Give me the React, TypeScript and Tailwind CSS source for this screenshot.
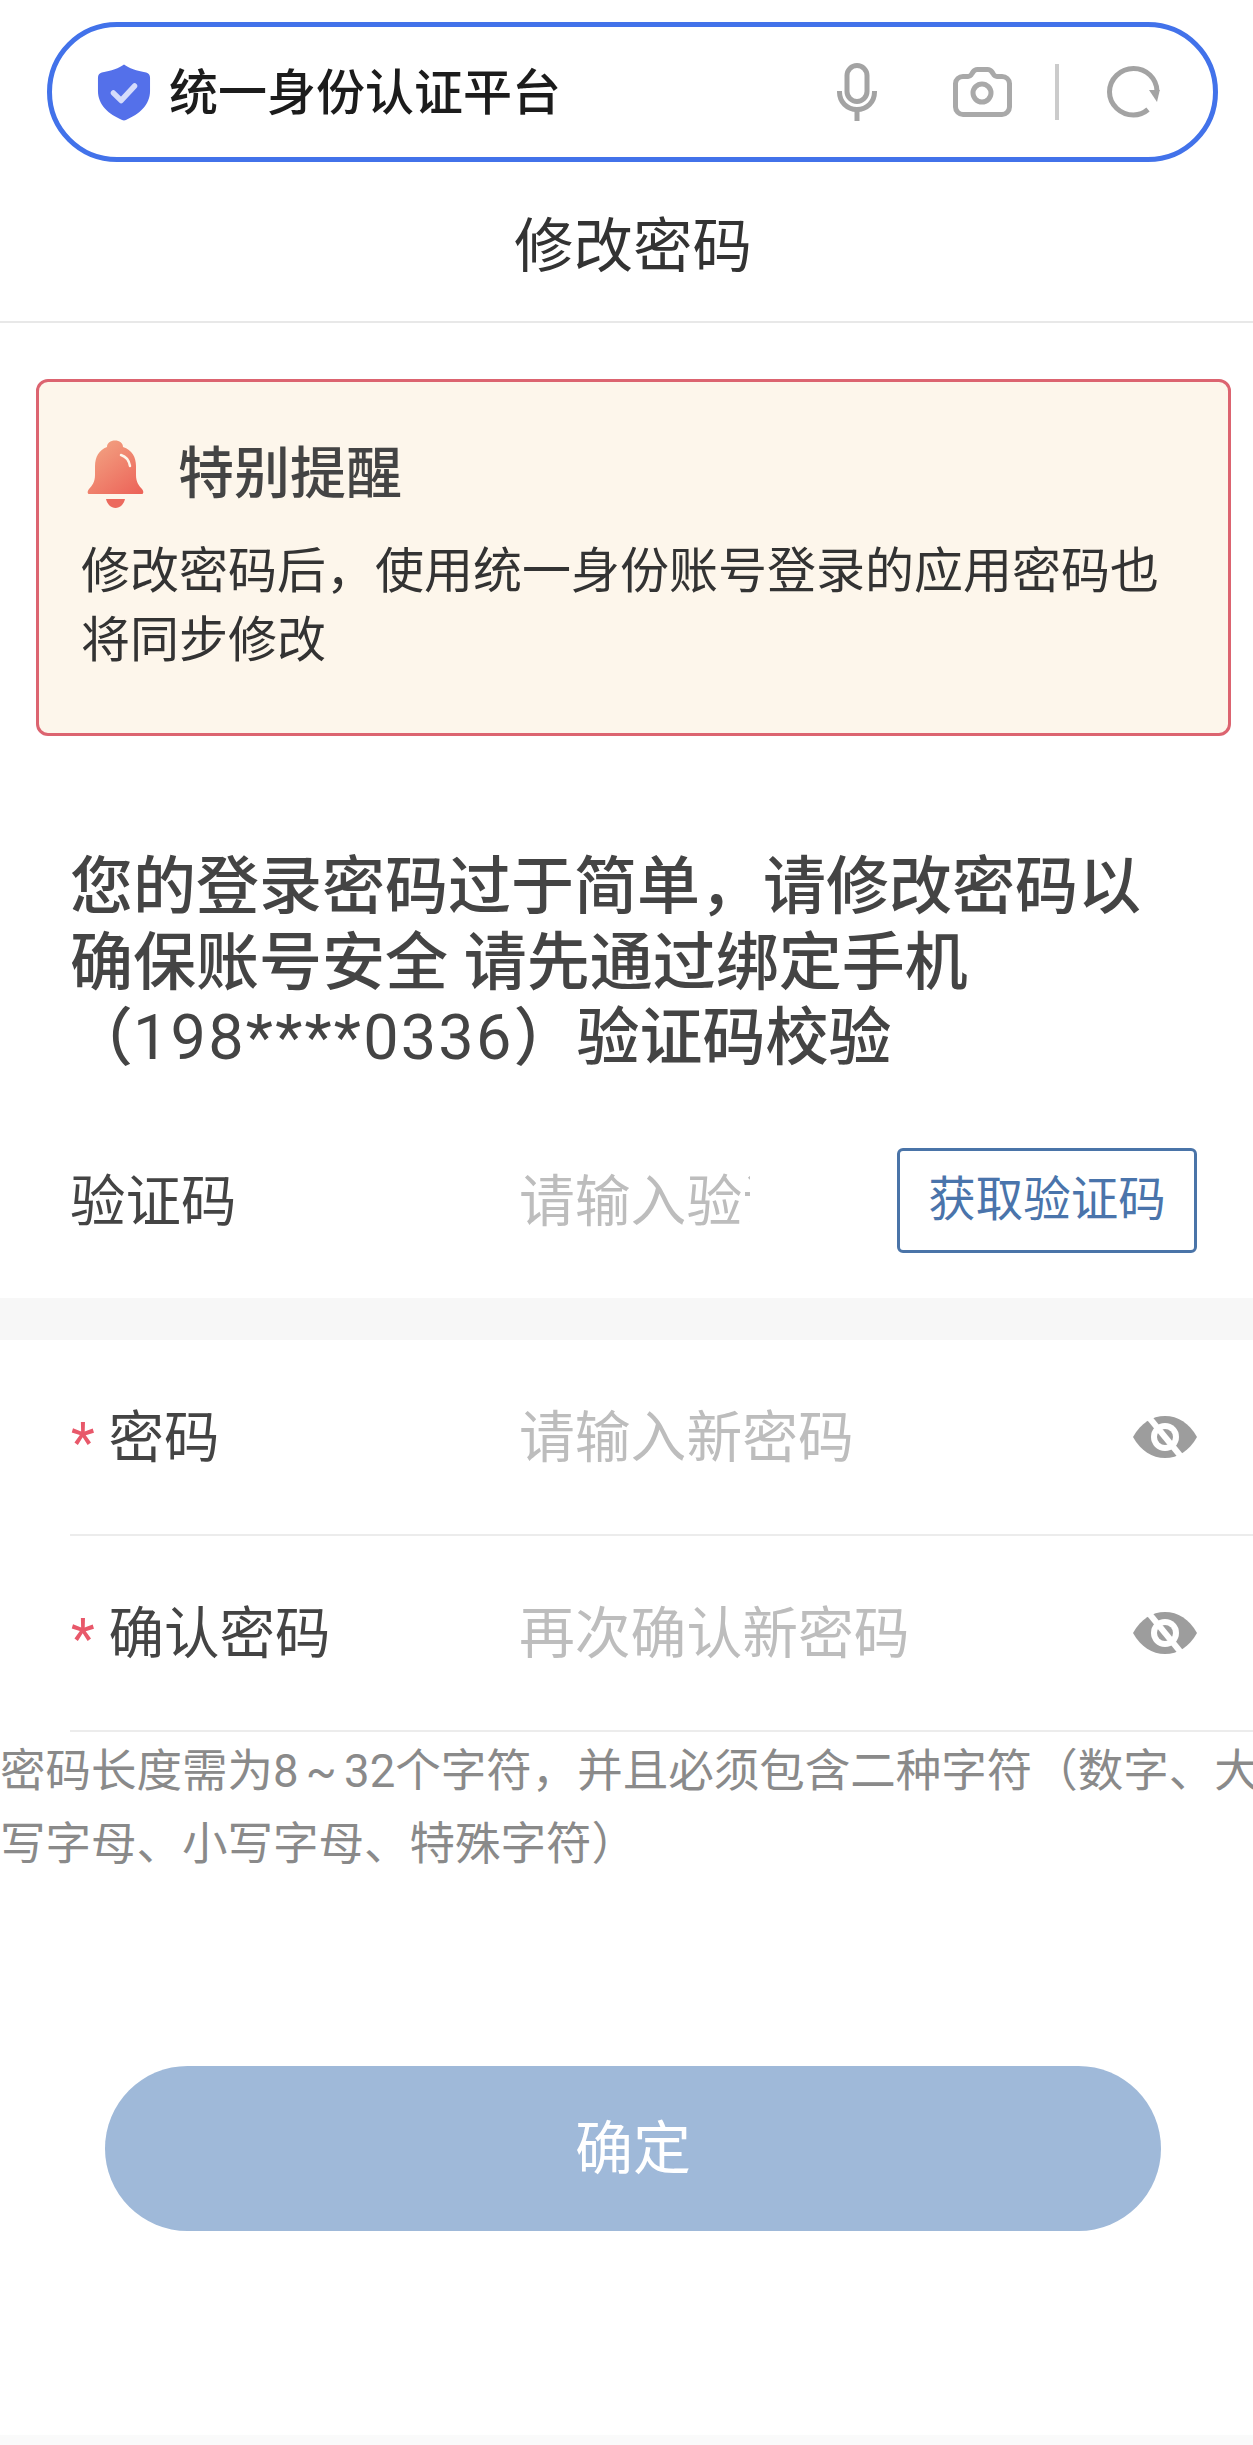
import React from "react";

function Shield() {
  return (
    <svg width="54" height="58" viewBox="0 0 56 58" preserveAspectRatio="none" className="shrink-0">
      <path d="M28 1.5C33 5 41 8 51 9.5C53.5 10 55 12 55 14.5V28C55 42 44 51 30 57C28.7 57.5 27.3 57.5 26 57C12 51 1 42 1 28V14.5C1 12 2.5 10 5 9.5C15 8 23 5 28 1.5Z" fill="#5470ea" />
      <path d="M17 30L25 37.5L39 23" fill="none" stroke="#d5dcfb" strokeWidth="5.5" strokeLinecap="round" strokeLinejoin="round" />
    </svg>
  );
}

function Mic() {
  return (
    <svg width="40" height="58" viewBox="0 0 40 58" className="shrink-0">
      <rect x="10" y="2.5" width="20" height="36" rx="10" fill="none" stroke="#a3a3a3" strokeWidth="5" />
      <path d="M2.5 28V29C2.5 39 10 46.5 20 46.5C30 46.5 37.5 39 37.5 29V28" fill="none" stroke="#a3a3a3" strokeWidth="5" />
      <path d="M20 46V58" stroke="#a3a3a3" strokeWidth="5" />
    </svg>
  );
}

function Camera() {
  return (
    <svg width="59" height="50" viewBox="0 0 59 50" className="shrink-0">
      <path d="M10 9.500H15C17 9.500 18 8.500 19 6.500L20 5C21 3.500 22.500 2.500 24.500 2.500H34.500C36.500 2.500 38 3.500 39 5L40 6.500C41 8.500 42 9.500 44 9.500H49C53 9.500 56.500 12.500 56.500 16.500V40C56.500 44 53 47.500 49 47.500H10C6 47.500 2.500 44 2.500 40V16.500C2.500 12.500 6 9.500 10 9.500Z" fill="none" stroke="#a9a9a9" strokeWidth="5" />
      <circle cx="29" cy="26" r="9" fill="none" stroke="#a9a9a9" strokeWidth="5" />
    </svg>
  );
}

function Refresh() {
  return (
    <svg width="53" height="52" viewBox="0 0 53 52" className="shrink-0">
      <path d="M41 43.500C37 47 32 49 26.500 49C13.500 49 2.500 38.500 2.500 26C2.500 13 13.500 2.500 26.500 2.500C39.500 2.500 49.500 12.500 50 25" fill="none" stroke="#a3a3a3" strokeWidth="5" />
      <path d="M42 24H52.800L50 36Z" fill="#a3a3a3" />
    </svg>
  );
}

function Bell() {
  return (
    <svg width="57" height="68" viewBox="0 0 57 68" className="shrink-0">
      <defs>
        <linearGradient id="bellFill" x1="0.1" y1="0" x2="0.9" y2="1">
          <stop offset="0" stopColor="#f3a584" />
          <stop offset="1" stopColor="#ec6459" />
        </linearGradient>
      </defs>
      <path d="M20 7C20 3 23.500 0.500 28 0.500C32.500 0.500 36 3 36 7C45 10 49 17 49 26V35C49 42 52 46 55 49C57 51.500 56.500 54 55 54H2C0.500 54 0 51.500 2 49C5 46 8 42 8 35V26C8 17 12 10 20 7Z" fill="url(#bellFill)" />
      <path d="M19 59H38C37 64 33 68 28.500 68C24 68 20 64 19 59Z" fill="#ec6a5e" />
      <path d="M34 15C39 16.500 42 20 43 26" fill="none" stroke="#fdf6eb" strokeWidth="2.500" strokeLinecap="round" />
    </svg>
  );
}

function EyeOff() {
  return (
    <svg width="64" height="44" viewBox="0 0 64 44" className="shrink-0">
      <path d="M0 22C8 8 19 1 32 1C45 1 56 8 64 22C56 36 45 43 32 43C19 43 8 36 0 22Z" fill="#9d9d9d" />
      <circle cx="32" cy="22" r="14" fill="#ffffff" />
      <circle cx="32" cy="22" r="8" fill="#9d9d9d" />
      <path d="M14 0L50 44" stroke="#ffffff" strokeWidth="6" />
    </svg>
  );
}

function PasswordRow({ label, placeholder }: { label: string; placeholder: string }) {
  return (
    <div className="ml-[70px] flex items-center h-[196px] border-b-2 border-[#ececec]">
      <span className="w-[38.500px] text-[#e8586a] text-[55px] leading-none pt-[13px] pl-[1px]">*</span>
      <span className="w-[410.500px] pt-[4px] text-[55.500px] text-[#444444] leading-none">{label}</span>
      <span className="flex-1 pt-[4px] text-[55.800px] text-[#bdbdbd] leading-none">{placeholder}</span>
      <span className="mr-[56px] flex">
        <EyeOff />
      </span>
    </div>
  );
}

export default function App() {
  return (
    <div
      className="w-[1253px] h-[2445px] bg-white overflow-hidden flex flex-col"
      style={{ fontFamily: 'Roboto, "Noto Sans CJK SC", sans-serif' }}
    >
      <div className="pt-[22px] pl-[47px] pr-[35px]">
        <div className="h-[140px] rounded-[70px] border-[5px] border-[#4272ea] flex items-center pl-[45px] pr-[53px]">
          <Shield />
          <span className="ml-[18px] pt-[3px] text-[49px] font-medium text-[#1c1c1c] leading-none flex-1">统一身份认证平台</span>
          <Mic />
          <span className="ml-[76px] flex"><Camera /></span>
          <span className="ml-[43px] w-[4px] h-[56px] bg-[#cbcbcb]" />
          <span className="ml-[48px] flex"><Refresh /></span>
        </div>
      </div>

      <div className="h-[161px] pl-[13px] pt-[12px] border-b-2 border-[#e8e8e8] flex items-center justify-center text-[59.500px] text-[#333333] leading-none">
        修改密码
      </div>

      <div className="mt-[56px] ml-[36px] mr-[22px] h-[357px] border-[3px] border-[#dc6470] rounded-[12px] bg-[#fdf6eb] pl-[42px] pr-[40px] pt-[58px]">
        <div className="flex items-center ml-[6px]">
          <Bell />
          <span className="ml-[34px] text-[56px] font-medium text-[#444444] leading-none">特别提醒</span>
        </div>
        <div className="mt-[29px] text-[49px] leading-[69px] text-[#333333]">
          修改密码后，使用统一身份账号登录的应用密码也将同步修改
        </div>
      </div>

      <div className="mt-[113px] pl-[70px] pr-[70px] text-[63px] leading-[75.500px] font-medium text-[#444444]">
        您的登录密码过于简单，请修改密码以确保账号安全 请先通过绑定手机（<span className="font-normal tracking-[2.200px]">198****0336</span>）验证码校验
      </div>

      <div className="mt-[72.500px] pl-[70px] pr-[56px] flex items-center h-[105px]">
        <span className="w-[449px] pt-[4px] text-[55.500px] text-[#444444] leading-none">验证码</span>
        <span className="w-[231px] pt-[4px] overflow-hidden whitespace-nowrap text-[55.800px] text-[#bdbdbd] leading-none">请输入验证码</span>
        <span className="ml-auto w-[300px] h-[105px] border-[3px] border-[#4a74a8] rounded-[6px] flex items-center justify-center text-[47.500px] text-[#4a74ab] leading-none">
          获取验证码
        </span>
      </div>

      <div className="mt-[45px] h-[42px] bg-[#f7f7f7]" />

      <PasswordRow label="密码" placeholder="请输入新密码" />
      <PasswordRow label="确认密码" placeholder="再次确认新密码" />

      <div className="pt-[3px] text-[45.500px] leading-[73px] text-[#8a8a8a] whitespace-nowrap">
        密码长度需为8<span className="inline-block w-[45.500px] text-center">~</span>32个字符，并且必须包含二种字符（数字、大
        <br />
        写字母、小写字母、特殊字符）
      </div>

      <div className="mt-[185px] ml-[105px] mr-[92px] h-[165px] rounded-[83px] bg-[#9fb9d9] flex items-center justify-center text-[58px] text-white leading-none">
        确定
      </div>

      <div className="mt-auto h-[10px] bg-[#fafafa]" />
    </div>
  );
}
